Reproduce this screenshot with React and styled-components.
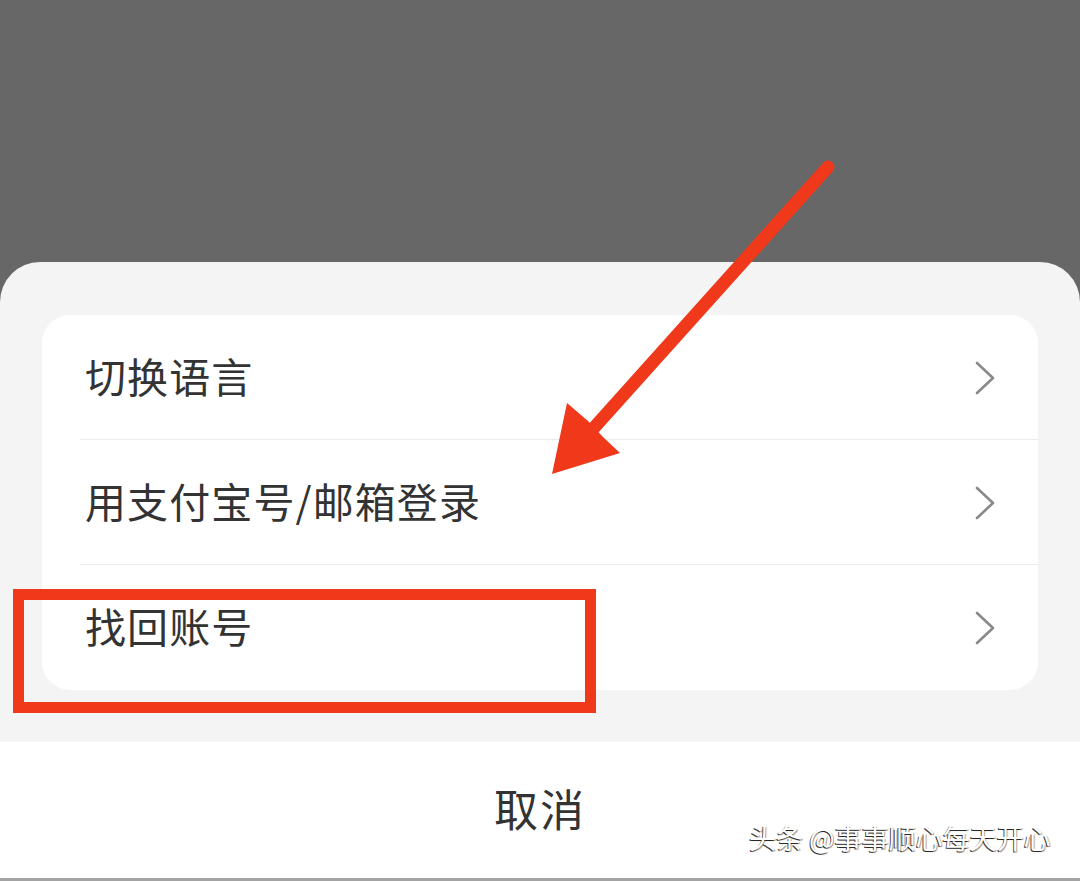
import React from "react";
import styled, { createGlobalStyle } from "styled-components";

const Global = createGlobalStyle`
  html, body { margin: 0; padding: 0; background: #676767; }
  body { font-family: "Noto Sans CJK SC", "Noto Sans", sans-serif; }
`;

const Page = styled.div`
  position: relative;
  width: 1080px;
  height: 881px;
  overflow: hidden;
  display: flex;
  flex-direction: column;
  background: #676767;
`;

const Backdrop = styled.div`
  flex: none;
  height: 262px;
`;

const Sheet = styled.div`
  flex: none;
  background: #f4f4f4;
  border-radius: 40px 40px 0 0;
  padding: 53px 42px 52px;
`;

const Card = styled.div`
  background: #ffffff;
  border-radius: 28px;
  overflow: hidden;
`;

const Row = styled.div`
  position: relative;
  height: 125px;
  display: flex;
  align-items: center;
  justify-content: space-between;
  padding: 0 42px 5px 43px;
  box-sizing: border-box;
  &:not(:last-child)::after {
    content: "";
    position: absolute;
    left: 38px;
    right: 0;
    bottom: 0;
    height: 1px;
    background: #ececec;
  }
`;

const Label = styled.span`
  font-size: 41px;
  line-height: 1;
  color: #333333;
  letter-spacing: 1.1px;
`;

const ChevronBox = styled.span`
  display: flex;
  margin-top: 5px;
`;

const Cancel = styled.div`
  flex: none;
  height: 136px;
  background: #ffffff;
  display: flex;
  align-items: center;
  justify-content: center;
  padding-bottom: 4px;
  box-sizing: border-box;
  font-size: 44px;
  line-height: 1;
  color: #333333;
  letter-spacing: 2px;
`;

const BottomLine = styled.div`
  flex: none;
  height: 3px;
  background: #a3a3a3;
`;

const Overlay = styled.svg`
  position: absolute;
  left: 0;
  top: 0;
  pointer-events: none;
`;

const Watermark = styled.div`
  position: absolute;
  left: 749px;
  top: 824px;
  font-size: 27px;
  line-height: 1;
  color: #ffffff;
  white-space: nowrap;
  text-shadow: -1px 1px 0 rgba(0, 0, 0, 0.75), 1px 1px 1px rgba(0, 0, 0, 0.4);
`;

const Chevron = () => (
  <ChevronBox>
    <svg width="22" height="34" viewBox="0 0 22 34" fill="none">
      <path d="M3 2 L19 17 L3 32" stroke="#8a8a8a" strokeWidth="2.6" strokeLinecap="round" strokeLinejoin="round" />
    </svg>
  </ChevronBox>
);

const items = ["切换语言", "用支付宝号/邮箱登录", "找回账号"];

export default function App() {
  return (
    <>
      <Global />
      <Page>
        <Backdrop />
        <Sheet>
          <Card>
            {items.map((t) => (
              <Row key={t}>
                <Label>{t}</Label>
                <Chevron />
              </Row>
            ))}
          </Card>
        </Sheet>
        <Cancel>取消</Cancel>
        <BottomLine />
        <Overlay width="1080" height="881" viewBox="0 0 1080 881">
          <rect x="18.5" y="594.5" width="572" height="113" fill="none" stroke="#f0391b" strokeWidth="11" />
          <line x1="828" y1="167" x2="592" y2="430" stroke="#f0391b" strokeWidth="13" strokeLinecap="round" />
          <polygon points="552,474 567,403 588,421 603,437 620,453" fill="#f0391b" />
        </Overlay>
        <Watermark>头条 @事事顺心每天开心</Watermark>
      </Page>
    </>
  );
}
